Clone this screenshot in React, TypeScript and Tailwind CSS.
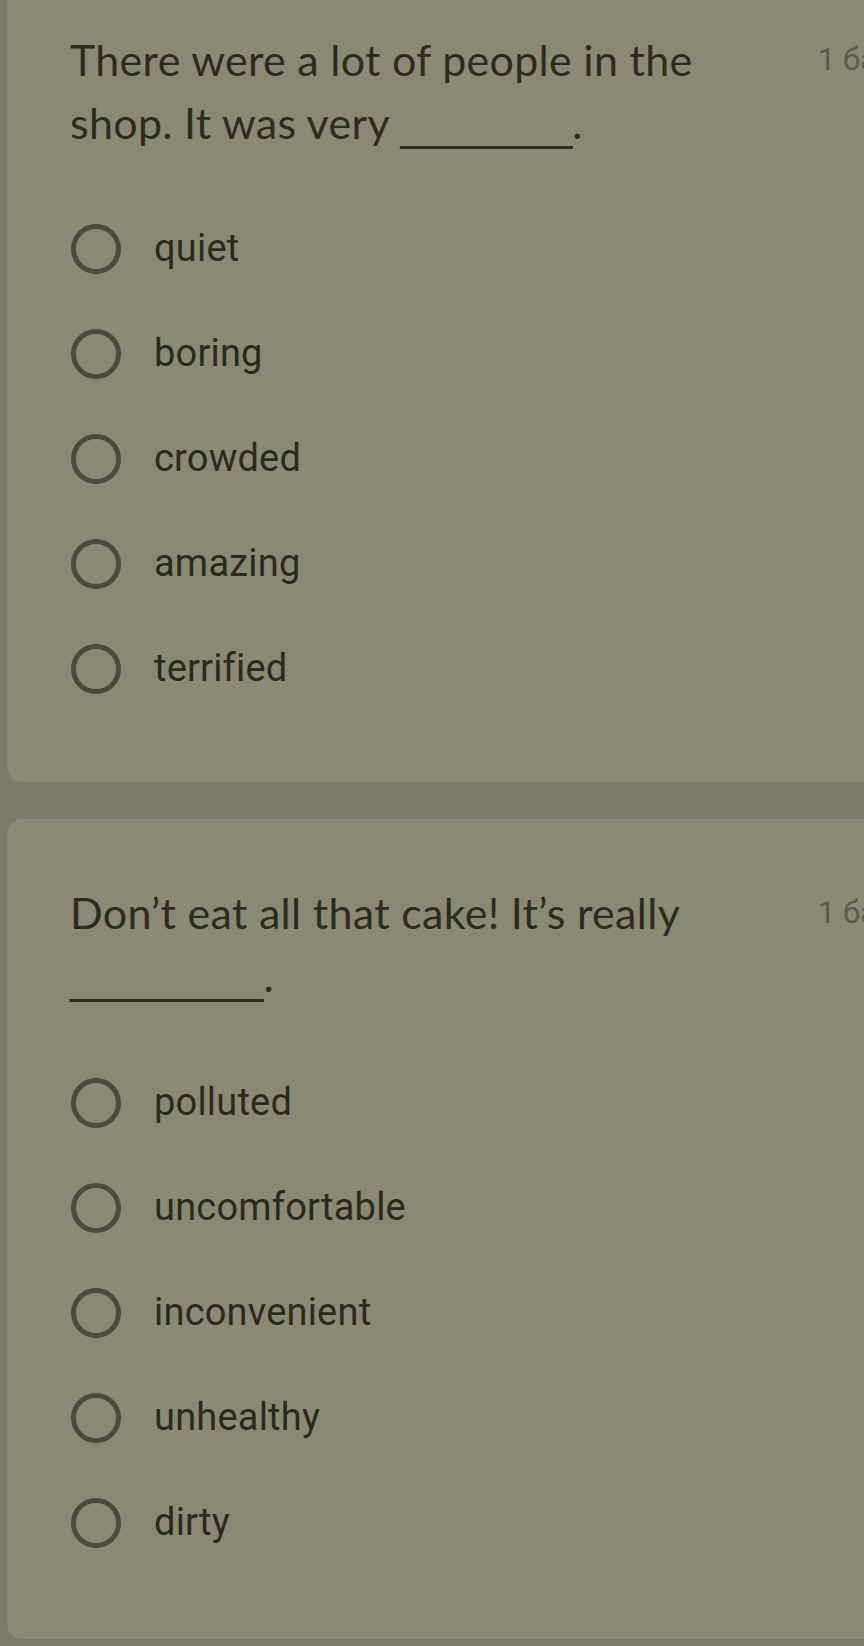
import React from "react";

type Q = {
  lines: React.ReactNode[];
  options: string[];
  pt: string;
  gapAfterQ: string;
  pb: string;
  rounded: string;
};

function Blank({ n }: { n: number }) {
  return (
    <span className="tracking-normal leading-none" style={{ fontFamily: "'DejaVu Sans', sans-serif" }}>
      {"_".repeat(n)}
    </span>
  );
}

const questions: Q[] = [
  {
    lines: [
      "There were a lot of people in the",
      <>
        shop. It was very <Blank n={8} />.
      </>,
    ],
    options: ["quiet", "boring", "crowded", "amazing", "terrified"],
    pt: "pt-[28px]",
    gapAfterQ: "mt-[42px]",
    pb: "pb-[61px]",
    rounded: "rounded-bl-[16px]",
  },
  {
    lines: [
      "Don\u2019t eat all that cake! It\u2019s really",
      <>
        <Blank n={9} />.
      </>,
    ],
    options: ["polluted", "uncomfortable", "inconvenient", "unhealthy", "dirty"],
    pt: "pt-[62px]",
    gapAfterQ: "mt-[43px]",
    pb: "pb-[64px]",
    rounded: "rounded-l-[16px]",
  },
];

function Radio() {
  return <div className="w-[50px] h-[50px] rounded-full border-[5px] border-[#4b4a3c] shrink-0" />;
}

function Card({ q }: { q: Q }) {
  return (
    <div className={`bg-[#8a8976] border-l border-b border-[#7c7b69] ${q.rounded} ${q.pt} ${q.pb}`}>
      <div className="flex items-start">
        <div
          className="pl-[63px] flex-1 text-[43px] tracking-[0.3px] leading-[63px] text-[#2d2d1f]"
          style={{ fontFamily: "Lato, 'Open Sans', sans-serif" }}
        >
          {q.lines.map((l, i) => (
            <div key={i} className="whitespace-pre h-[63px] overflow-visible">
              {l}
            </div>
          ))}
        </div>
        <div
          className="w-[46px] overflow-hidden whitespace-nowrap text-[31px] leading-[63px] text-[#5c5b4d]"
          style={{ fontFamily: "Roboto, sans-serif" }}
        >
          1 балл
        </div>
      </div>
      <div className={`${q.gapAfterQ} flex flex-col`}>
        {q.options.map((o) => (
          <div key={o} className="h-[105px] flex items-center pl-[64px]">
            <Radio />
            <span
              className="ml-[33px] text-[38px] tracking-[0.2px] text-[#2b2b1d]"
              style={{ fontFamily: "Roboto, sans-serif" }}
            >
              {o}
            </span>
          </div>
        ))}
      </div>
    </div>
  );
}

export default function App() {
  return (
    <div className="bg-[#7e7b6e] w-[864px] h-[1646px] overflow-hidden pl-[6px]">
      <Card q={questions[0]} />
      <div className="h-[36px]" />
      <Card q={questions[1]} />
    </div>
  );
}
